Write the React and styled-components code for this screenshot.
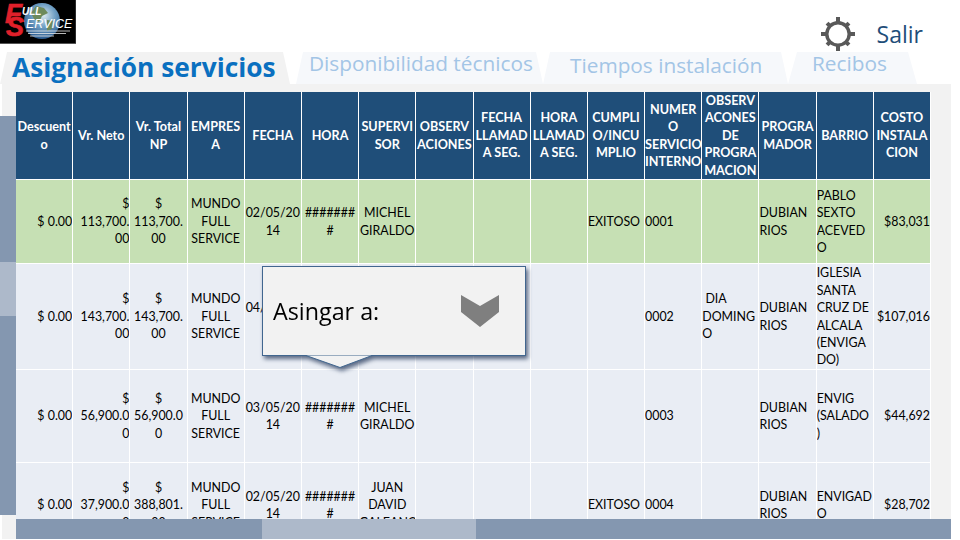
import React from 'react';
import styled, { createGlobalStyle } from 'styled-components';

const GlobalStyle = createGlobalStyle`
    html, body {
        margin: 0;
        padding: 0;
        background: #fff;
    }
    body {
        font-family: "Open Sans", "Liberation Sans", sans-serif;
    }
`;

const Page = styled.div`
    width: 960px;
    height: 540px;
    overflow: hidden;
    display: flex;
    flex-direction: column;
`;

const TopBar = styled.header`
    height: 52px;
    display: flex;
    justify-content: space-between;
`;

const LogoBox = styled.div`
    width: 76px;
    height: 44px;
`;

const UserArea = styled.div`
    display: flex;
    align-items: flex-start;
    padding: 16px 37px 0 0;
`;

const Salir = styled.span`
    margin: 1px 0 0 21px;
    font-size: 23px;
    line-height: 34px;
    color: #1f4e79;
`;

const Tabs = styled.nav`
    height: 32px;
    display: flex;
`;

const Tab = styled.div`
    width: ${p => p.$width}px;
    margin-left: ${p => p.$gap || 0}px;
    padding: ${p => p.$top}px 0 0 ${p => p.$left}px;
    box-sizing: border-box;
    background: ${p => (p.$active ? '#f2f2f2' : '#f6f8fb')};
    clip-path: polygon(0 100%, ${p => p.$slant}px 0, calc(100% - ${p => p.$slant}px) 0, 100% 100%);
    color: ${p => (p.$active ? '#0a70c0' : '#a3c5e6')};
    font-size: ${p => p.$size}px;
    font-weight: ${p => (p.$active ? 700 : 400)};
    line-height: 22px;
    white-space: nowrap;
`;

const Panel = styled.section`
    position: relative;
    height: 455px;
    width: 951px;
    box-sizing: border-box;
    padding-top: 8px;
    display: flex;
    background: linear-gradient(to right, #fff 2px, #f2f2f2 2px);
`;

const Rail = styled.div`
    flex: none;
    width: 16px;
    height: 399px;
    margin-top: 24px;
    background: #8497b0;
`;

const RailThumb = styled.div`
    height: 54px;
    margin-top: 146px;
    background: #adb9ca;
`;

const Main = styled.div`
    flex: 1;
    min-width: 0;
`;

const TableClip = styled.div`
    height: 427px;
    overflow: hidden;
`;

const Grid = styled.table`
    width: 916px;
    margin-left: -1px;
    margin-top: -1px;
    table-layout: fixed;
    border-collapse: separate;
    border-spacing: 1px;
    background: #fff;
    font-family: "Lato", "Liberation Sans", sans-serif;
    font-size: 12.4px;
    line-height: 17.4px;
`;

const HeadCell = styled.th`
    height: 87px;
    padding: 0;
    background: #1f4e79;
    color: #fff;
    font-size: 12.6px;
    font-weight: 700;
    text-align: center;
    white-space: pre;
    overflow: hidden;
`;

const BodyCell = styled.td`
    height: ${p => p.$height}px;
    padding: 0;
    background: ${p => (p.$green ? '#c6e0b4' : '#e9edf4')};
    color: #000;
    text-align: ${p => p.$align};
    white-space: pre;
    overflow: hidden;
`;

const HScroll = styled.div`
    height: 20px;
    background: #8497b0;
`;

const HThumb = styled.div`
    width: 214px;
    height: 20px;
    margin-left: 246px;
    background: #adb9ca;
`;

const Callout = styled.div`
    position: absolute;
    left: 262px;
    top: 182px;
    filter: drop-shadow(2px 3px 2px rgba(30, 50, 85, 0.7));
`;

const CalloutBox = styled.div`
    width: 264px;
    height: 90px;
    box-sizing: border-box;
    padding: 0 26px 0 10px;
    display: flex;
    align-items: center;
    justify-content: space-between;
    background: #f2f2f2;
    border: 1px solid #41668f;
    color: #000;
    font-size: 23.3px;
`;

const CalloutTip = styled.svg`
    display: block;
    margin: -1px 0 0 44px;
`;

const heads = [
    'Descuent\no', 'Vr. Neto', 'Vr. Total\nNP', 'EMPRES\nA', 'FECHA', 'HORA', 'SUPERVI\nSOR', 'OBSERV\nACIONES',
    'FECHA\nLLAMAD\nA SEG.', 'HORA\nLLAMAD\nA SEG.', 'CUMPLI\nO/INCU\nMPLIO', 'NUMER\nO\nSERVICIO\nINTERNO',
    'OBSERV\nACONES\nDE\nPROGRA\nMACION', 'PROGRA\nMADOR', 'BARRIO', 'COSTO\nINSTALA\nCION',
];

const aligns = [
    'right', 'right', 'center', 'center', 'center', 'center', 'center', 'center',
    'center', 'center', 'left', 'left', 'left', 'left', 'left', 'right',
];

const rows = [
    {
        height: 83,
        green: true,
        cells: ['$ 0.00', '$\n113,700.\n00', '$\n113,700.\n00', 'MUNDO\nFULL\nSERVICE', '02/05/20\n14', '#######\n#', 'MICHEL\nGIRALDO', '', '', '', 'EXITOSO', '0001', '', 'DUBIAN\nRIOS', 'PABLO\nSEXTO\nACEVED\nO', '$83,031'],
    },
    {
        height: 105,
        cells: ['$ 0.00', '$\n143,700.\n00', '$\n143,700.\n00', 'MUNDO\nFULL\nSERVICE', '04/05/20\n14', '#######\n#', 'MICHEL\nGIRALDO', '', '', '', '', '0002', ' DIA\nDOMING\nO', 'DUBIAN\nRIOS', 'IGLESIA\nSANTA\nCRUZ DE\nALCALA\n(ENVIGA\nDO)', '$107,016'],
    },
    {
        height: 92,
        cells: ['$ 0.00', '$\n56,900.0\n0', '$\n56,900.0\n0', 'MUNDO\nFULL\nSERVICE', '03/05/20\n14', '#######\n#', 'MICHEL\nGIRALDO', '', '', '', '', '0003', '', 'DUBIAN\nRIOS', 'ENVIG\n(SALADO\n)', '$44,692'],
    },
    {
        height: 84,
        cells: ['$ 0.00', '$\n37,900.0\n0', '$\n388,801.\n00', 'MUNDO\nFULL\nSERVICE', '02/05/20\n14', '#######\n#', 'JUAN\nDAVID\nGALEANO', '', '', '', 'EXITOSO', '0004', '', 'DUBIAN\nRIOS', 'ENVIGAD\nO', '$28,702'],
    },
];

const Logo = () => (
    <svg width="76" height="44" viewBox="0 0 76 44">
        <defs>
            <radialGradient id="globe" cx="0.55" cy="0.35" r="0.7">
                <stop offset="0" stopColor="#dbe8f0" />
                <stop offset="0.45" stopColor="#6f9fc4" />
                <stop offset="1" stopColor="#1f4f86" />
            </radialGradient>
        </defs>
        <rect width="76" height="44" fill="#000" />
        <rect x="0" y="43" width="76" height="1" fill="#555" />
        <rect x="75.5" y="0" width="0.5" height="44" fill="#555" />
        <circle cx="42" cy="21" r="18" fill="url(#globe)" />
        <path d="M36 6l8 2 4 5-6 3-3 6-5-3-3-6z M47 20l7 1-2 8-5 2z" fill="#6d8a5c" />
        <path d="M26 31h44M28 33.500h38M30 36h24" stroke="#e8e8e8" strokeWidth="0.8" />
        <text x="5" y="23" fontFamily="Liberation Sans" fontSize="28" fontWeight="700" fontStyle="italic" fill="#e0202a" stroke="#e0202a" strokeWidth="0.6">F</text>
        <text x="6" y="36" fontFamily="Liberation Sans" fontSize="27" fontWeight="700" fontStyle="italic" fill="#e0202a" stroke="#e0202a" strokeWidth="0.6">S</text>
        <text x="22" y="15" fontFamily="Liberation Sans" fontSize="10" fontWeight="700" fontStyle="italic" fill="#fff">ULL</text>
        <text x="26" y="27.500" fontFamily="Liberation Sans" fontSize="12.500" fontStyle="italic" fill="#fff">ERVICE</text>
    </svg>
);

const Gear = () => (
    <svg width="36" height="36" viewBox="-18 -18 36 36" fill="#595959">
        <circle r="11.200" fill="none" stroke="#595959" strokeWidth="3.400" />
        <rect x="-2" y="-17" width="4" height="6" />
        <rect x="-2" y="11" width="4" height="6" />
        <rect x="-17" y="-2" width="6" height="4" />
        <rect x="11" y="-2" width="6" height="4" />
        <rect x="-2" y="-15.500" width="4" height="4" transform="rotate(45)" />
        <rect x="-2" y="-15.500" width="4" height="4" transform="rotate(135)" />
        <rect x="-2" y="-15.500" width="4" height="4" transform="rotate(225)" />
        <rect x="-2" y="-15.500" width="4" height="4" transform="rotate(315)" />
    </svg>
);

const Chevron = () => (
    <svg width="38" height="32" viewBox="0 0 38 32">
        <polygon points="0,0 19,11 38,0 38,17 19,32 0,17" fill="#7f7f7f" />
    </svg>
);

export default function App() {
    return (
        <Page>
            <GlobalStyle />
            <TopBar>
                <LogoBox><Logo /></LogoBox>
                <UserArea>
                    <Gear />
                    <Salir>Salir</Salir>
                </UserArea>
            </TopBar>
            <Tabs>
                <Tab $active $width={290} $slant={7} $top={4} $left={12} $size={26.3}>Asignación servicios</Tab>
                <Tab $gap={6} $width={247} $slant={7} $top={0} $left={13} $size={20.8}>Disponibilidad técnicos</Tab>
                <Tab $width={245} $slant={7} $top={2} $left={27} $size={20.8}>Tiempos instalación</Tab>
                <Tab $width={129} $slant={9} $top={0} $left={24} $size={20.8}>Recibos</Tab>
            </Tabs>
            <Panel>
                <Rail><RailThumb /></Rail>
                <Main>
                    <TableClip>
                        <Grid>
                            <thead>
                                <tr>
                                    {heads.map(h => <HeadCell key={h}>{h}</HeadCell>)}
                                </tr>
                            </thead>
                            <tbody>
                                {rows.map((row, r) => (
                                    <tr key={r}>
                                        {row.cells.map((c, i) => (
                                            <BodyCell key={i} $height={row.height} $green={row.green} $align={aligns[i]}>{c}</BodyCell>
                                        ))}
                                    </tr>
                                ))}
                            </tbody>
                        </Grid>
                    </TableClip>
                    <HScroll><HThumb /></HScroll>
                </Main>
                <Callout>
                    <CalloutBox>
                        <span>Asingar a:</span>
                        <Chevron />
                    </CalloutBox>
                    <CalloutTip width="68" height="14" viewBox="0 0 68 14">
                        <path d="M0 0.500 L34 12.500 L66 0.500 Z" fill="#f2f2f2" />
                        <path d="M0 0.500 L34 12.500 L66 0.500" fill="none" stroke="#41668f" />
                    </CalloutTip>
                </Callout>
            </Panel>
        </Page>
    );
}
